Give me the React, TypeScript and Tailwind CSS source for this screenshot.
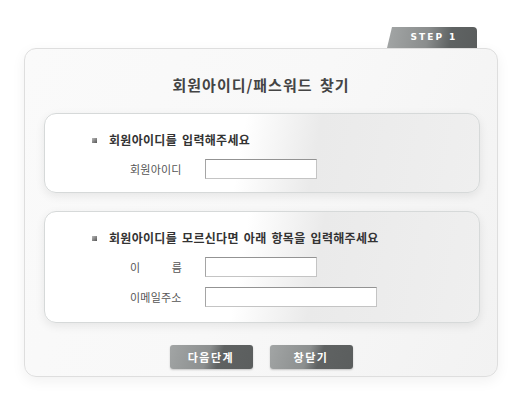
import React from 'react';

const font = { fontFamily: '"Noto Sans CJK KR", "Noto Sans", sans-serif' };

const Bullet = () => (
  <span className="block w-[5px] h-[5px] bg-[linear-gradient(135deg,#bbb,#555)]" />
);

const Field = ({ w }: { w: string }) => (
  <input
    type="text"
    className={`h-[20px] ${w} bg-white border border-[#c4c4c4] border-t-[#939393] border-l-[#a5a5a5] outline-none`}
  />
);

const Box: React.FC<{ title: string; h: string; children: React.ReactNode }> = ({ title, h, children }) => (
  <div
    className={`${h} w-[436px] rounded-[12px] border border-[#d6d9d9] shadow-[0_3px_10px_rgba(0,0,0,0.08)] bg-[linear-gradient(100deg,#ffffff_0%,#ffffff_45%,#eaeaea_62%,#efefef_100%)] pl-[47px]`}
  >
    <div className="flex items-center gap-[12px] h-[14px] mt-[19px]">
      <Bullet />
      <span className="text-[12px] font-bold text-[#333] tracking-[0.3px] [word-spacing:2px]">{title}</span>
    </div>
    <div className="flex flex-col gap-[10px] mt-[12px] pl-[38px]">{children}</div>
  </div>
);

const Row: React.FC<{ label: React.ReactNode; children: React.ReactNode }> = ({ label, children }) => (
  <div className="flex items-center gap-[23px]">
    <div className="w-[52px] text-[11px] text-[#555] tracking-[0.2px]">{label}</div>
    {children}
  </div>
);

const Btn = ({ text }: { text: string }) => (
  <button className="w-[83px] h-[24px] rounded-[3px] bg-[linear-gradient(110deg,#a2a5a5_0%,#8c8f8f_45%,#5f6262_60%,#5b5e5e_100%)] text-white text-[11px] font-bold tracking-[1.5px] shadow-[0_1px_2px_rgba(0,0,0,0.2)]">
    {text}
  </button>
);

export default function App() {
  return (
    <div className="w-[520px] h-[420px] bg-white pt-[27px] pl-[24px]" style={font}>
      <div className="w-[474px] flex justify-end pr-[21px]">
        <div className="w-[90px] h-[21px] rounded-tr-[4px] [clip-path:polygon(5px_0,100%_0,100%_100%,0_100%)] bg-[linear-gradient(100deg,#a3a6a6_0%,#8a8d8d_45%,#5f6363_70%,#5a5d5d_100%)] flex items-center justify-center pl-[4px]">
          <span className="text-white text-[9px] font-bold tracking-[2px]" style={{ fontFamily: '"DejaVu Sans", sans-serif' }}>
            STEP 1
          </span>
        </div>
      </div>
      <div className="w-[474px] h-[329px] rounded-[12px] border border-[#dedede] bg-[linear-gradient(115deg,#fafafa_0%,#f8f8f8_50%,#f2f2f2_100%)] shadow-[0_4px_14px_rgba(0,0,0,0.06)] flex flex-col items-center">
        <h1 className="mt-[26px] h-[20px] leading-[20px] text-[15px] font-semibold text-[#444] tracking-[1px] [word-spacing:3px]">
          회원아이디/패스워드 찾기
        </h1>
        <div className="mt-[18px] flex flex-col gap-[18px] ml-[2px]">
          <Box title="회원아이디를 입력해주세요" h="h-[80px]">
            <Row label="회원아이디">
              <Field w="w-[112px]" />
            </Row>
          </Box>
          <Box title="회원아이디를 모르신다면 아래 항목을 입력해주세요" h="h-[112px]">
            <Row
              label={
                <div className="flex justify-between">
                  <span>이</span>
                  <span>름</span>
                </div>
              }
            >
              <Field w="w-[112px]" />
            </Row>
            <Row label="이메일주소">
              <Field w="w-[172px]" />
            </Row>
          </Box>
        </div>
        <div className="flex gap-[17px] mt-[22px]">
          <Btn text="다음단계" />
          <Btn text="창닫기" />
        </div>
      </div>
    </div>
  );
}
